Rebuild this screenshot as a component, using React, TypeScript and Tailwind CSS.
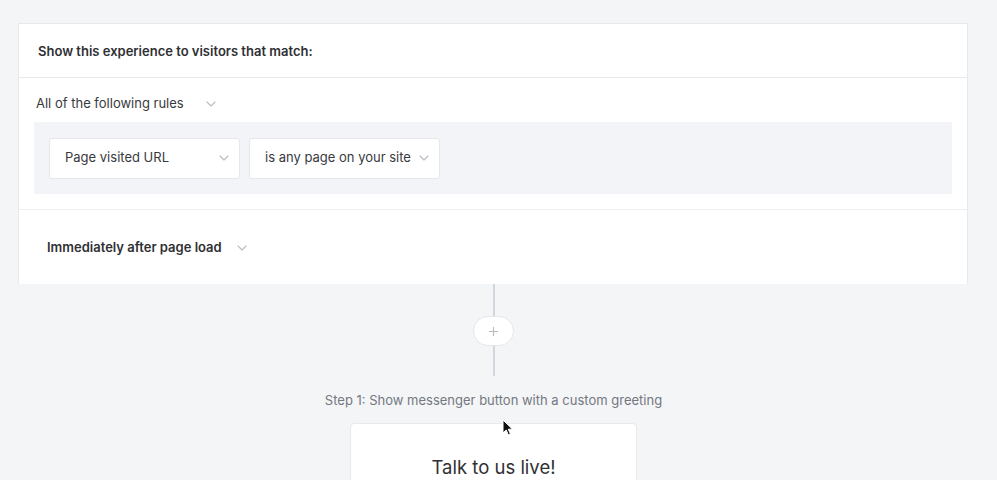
import React from "react";

const Chevron = ({ className = "" }: { className?: string }) => (
  <svg className={className} width="10" height="6" viewBox="0 0 10 6" fill="none">
    <path d="M1 1l4 4 4-4" stroke="#b8bcc4" strokeWidth="1.1" strokeLinecap="round" strokeLinejoin="round" />
  </svg>
);

export default function App() {
  return (
    <div
      className="relative w-[997px] h-[480px] overflow-hidden bg-[#f4f5f7] text-[#333]"
      style={{ fontFamily: "Inter, 'Liberation Sans', sans-serif" }}
    >
      <div className="pt-[23px] pl-[18px]">
        <div className="w-[950px] bg-white border border-b-0 border-[#e8e9ec]">
          <div className="h-[54px] flex items-center pl-[19px] pt-[2px] border-b border-[#e8e9ec]">
            <span className="text-[13px] font-semibold text-[#2f3033]">Show this experience to visitors that match:</span>
          </div>
          <div className="h-[44px] flex items-center pl-[17px] pt-[8px]">
            <span className="text-[13px] text-[#383a3e]">All of the following rules</span>
            <Chevron className="ml-[22px]" />
          </div>
          <div className="mx-[15px] h-[72px] bg-[#f3f4f8] flex items-center pl-[15px] gap-[9px]">
            <div className="w-[191px] h-[41px] bg-white border border-[#e6e7eb] rounded-[3px] flex items-center justify-between pl-[15px] pr-[10px]">
              <span className="text-[13px] text-[#383a3e]">Page visited URL</span>
              <Chevron />
            </div>
            <div className="w-[191px] h-[41px] bg-white border border-[#e6e7eb] rounded-[3px] flex items-center justify-between pl-[15px] pr-[10px]">
              <span className="text-[13px] text-[#383a3e]">is any page on your site</span>
              <Chevron />
            </div>
          </div>
          <div className="mt-[15px] h-[75px] border-t border-[#eeeff2] flex items-center pl-[28px] pt-[1px]">
            <span className="text-[13px] font-semibold text-[#2f3033]">Immediately after page load</span>
            <Chevron className="ml-[15px]" />
          </div>
        </div>
      </div>
      <div className="flex flex-col items-center w-[987px]">
        <div className="w-[2px] h-[32px] bg-[#d3d6dc]" />
        <div className="w-[41px] h-[30px] rounded-full bg-white border border-[#e6e7eb] flex items-center justify-center">
          <svg width="11" height="11" viewBox="0 0 11 11">
            <path d="M5.5 1v9M1 5.5h9" stroke="#b5b9c0" strokeWidth="1.1" />
          </svg>
        </div>
        <div className="w-[2px] h-[30px] bg-[#d3d6dc]" />
        <div className="mt-[16px] text-[13px] text-[#737880] leading-[16px]">Step 1: Show messenger button with a custom greeting</div>
        <div className="mt-[15px] w-[287px] h-[80px] bg-white border border-[#e8e9ec] rounded-[4px] flex justify-center pt-[30px]">
          <span className="text-[18.5px] text-[#2f3033] leading-[26px]">Talk to us live!</span>
        </div>
      </div>
      <svg className="absolute left-[502px] top-[419px]" width="12" height="18" viewBox="0 0 12 18">
        <path d="M1 1v13l3.2-3 2.2 5 2-0.9-2.1-4.9H10.5z" fill="#111" stroke="#fff" strokeWidth="1" />
      </svg>
    </div>
  );
}
